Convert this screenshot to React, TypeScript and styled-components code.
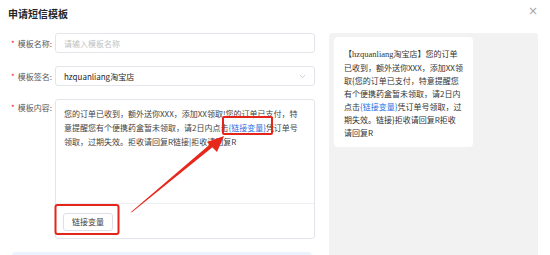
import React from 'react';
import styled, { createGlobalStyle } from 'styled-components';

const GlobalStyle = createGlobalStyle`
  html, body { margin: 0; padding: 0; background: #ffffff; }
  body { font-family: "Noto Sans CJK SC", "Noto Sans", sans-serif; }
`;

const Page = styled.div`
  position: relative;
  width: 550px;
  height: 255px;
  overflow: hidden;
  background: #ffffff;
`;

const Header = styled.div`
  display: flex;
  justify-content: space-between;
  align-items: center;
  height: 26px;
  padding: 0 12px 0 8px;
`;

const Title = styled.h1`
  margin: 0;
  font-size: 10px;
  font-weight: 700;
  color: #262626;
`;

const Close = styled.span`
  font-size: 12px;
  line-height: 12px;
  color: #a6a6a6;
  margin-top: -4px;
  font-family: "DejaVu Sans", sans-serif;
`;

const Body = styled.div`
  display: flex;
  gap: 14px;
  padding-top: 7px;
`;

const Form = styled.div`
  width: 315px;
  display: flex;
  flex-direction: column;
  gap: 13px;
`;

const Row = styled.div<{ $top?: boolean }>`
  display: flex;
  align-items: ${p => (p.$top ? 'flex-start' : 'center')};
`;

const Label = styled.div<{ $pad?: number }>`
  width: 52px;
  padding-right: 3px;
  padding-top: ${p => p.$pad ?? 0}px;
  text-align: right;
  font-size: 8px;
  color: #595959;
  white-space: nowrap;
  &::before {
    content: '*';
    color: #f5222d;
    margin-right: 3px;
  }
`;

const Input = styled.div<{ $placeholder?: boolean }>`
  box-sizing: border-box;
  width: 260px;
  height: 20px;
  border: 1px solid #e3e5ea;
  border-radius: 3px;
  padding: 0 8px;
  display: flex;
  align-items: center;
  justify-content: space-between;
  font-size: 8px;
  color: ${p => (p.$placeholder ? '#bfbfbf' : '#262626')};
`;

const Editor = styled.div`
  box-sizing: border-box;
  width: 260px;
  height: 140px;
  border: 1px solid #e3e5ea;
  border-radius: 3px;
  display: flex;
  flex-direction: column;
`;

const EditorText = styled.div`
  flex: 1;
  padding: 7px 8px 0;
  font-size: 8px;
  line-height: 14px;
  color: #434343;
  white-space: nowrap;
`;

const LinkVar = styled.span`
  color: #2f6fe0;
`;

const Toolbar = styled.div`
  height: 34px;
  border-top: 1px solid #eceef2;
  display: flex;
  align-items: center;
  padding-left: 7px;
`;

const VarButton = styled.button`
  width: 50px;
  height: 18px;
  border: 1px solid #dcdfe6;
  border-radius: 3px;
  background: #ffffff;
  font-family: "Noto Sans CJK SC", sans-serif;
  font-size: 8px;
  color: #434343;
  padding: 0;
  margin-top: 1px;
`;

const InfoBar = styled.div`
  margin: 13px 3px 0 12px;
  height: 12px;
  background: #eaf3fe;
  border-radius: 4px 4px 0 0;
`;

const Preview = styled.div`
  width: 209px;
  height: 230px;
  background: #f2f2f2;
  border-radius: 3px;
  padding: 4px 5px;
  box-sizing: border-box;
`;

const PreviewCard = styled.div`
  width: 139px;
  box-sizing: border-box;
  background: #ffffff;
  border-radius: 4px;
  padding: 10px 10px 8px;
  font-size: 8px;
  line-height: 13px;
  color: #333333;
  white-space: nowrap;
`;

const Mono = styled.span`
  font-family: "Liberation Serif", serif;
  font-size: 8.5px;
`;

const Annotations = styled.svg`
  position: absolute;
  left: 0;
  top: 0;
  pointer-events: none;
`;

const Chevron = () => (
  <svg width="7" height="5" viewBox="0 0 7 5">
    <path d="M1 1.2 L3.5 3.6 L6 1.2" fill="none" stroke="#bfbfbf" strokeWidth="0.8" />
  </svg>
);

export default function App() {
  return (
    <Page>
      <GlobalStyle />
      <Header>
        <Title>申请短信模板</Title>
        <Close>×</Close>
      </Header>
      <Body>
        <div>
          <Form>
            <Row>
              <Label>模板名称:</Label>
              <Input $placeholder>请输入模板名称</Input>
            </Row>
            <Row>
              <Label>模板签名:</Label>
              <Input>
                hzquanliang淘宝店
                <Chevron />
              </Input>
            </Row>
            <Row $top>
              <Label $pad={3}>模板内容:</Label>
              <Editor>
                <EditorText>
                  您的订单已收到，额外送你XXX，添加XX领取!您的订单已支付，特
                  <br />
                  意提醒您有个便携药盒暂未领取，请2日内点击<LinkVar>{'{链接变量}'}</LinkVar>凭订单号
                  <br />
                  领取，过期失效。拒收请回复R链接|拒收请回复R
                </EditorText>
                <Toolbar>
                  <VarButton>链接变量</VarButton>
                </Toolbar>
              </Editor>
            </Row>
          </Form>
          <InfoBar />
        </div>
        <Preview>
          <PreviewCard>
            【<Mono>hzquanliang</Mono>淘宝店】您的订单
            <br />
            已收到，额外送你XXX，添加XX领
            <br />
            取{'{'}您的订单已支付，特意提醒您
            <br />
            有个便携药盒暂未领取，请2日内
            <br />
            点击<LinkVar>{'{链接变量}'}</LinkVar>凭订单号领取，过
            <br />
            期失效。链接{'}'}拒收请回复R拒收
            <br />
            请回复R
          </PreviewCard>
        </Preview>
      </Body>
      <Annotations width="550" height="255" viewBox="0 0 550 255">
        <rect x="55.5" y="205" width="63" height="29" rx="2" fill="none" stroke="#e3251b" strokeWidth="2" />
        <rect x="223" y="117" width="49" height="17" rx="1" fill="none" stroke="#e3251b" strokeWidth="2" />
        <polygon points="131,212 131.6,212.6 214,146 211.5,143" fill="#e8271c" />
        <polygon points="224,136 207,142 217,152" fill="#e8271c" />
      </Annotations>
    </Page>
  );
}
